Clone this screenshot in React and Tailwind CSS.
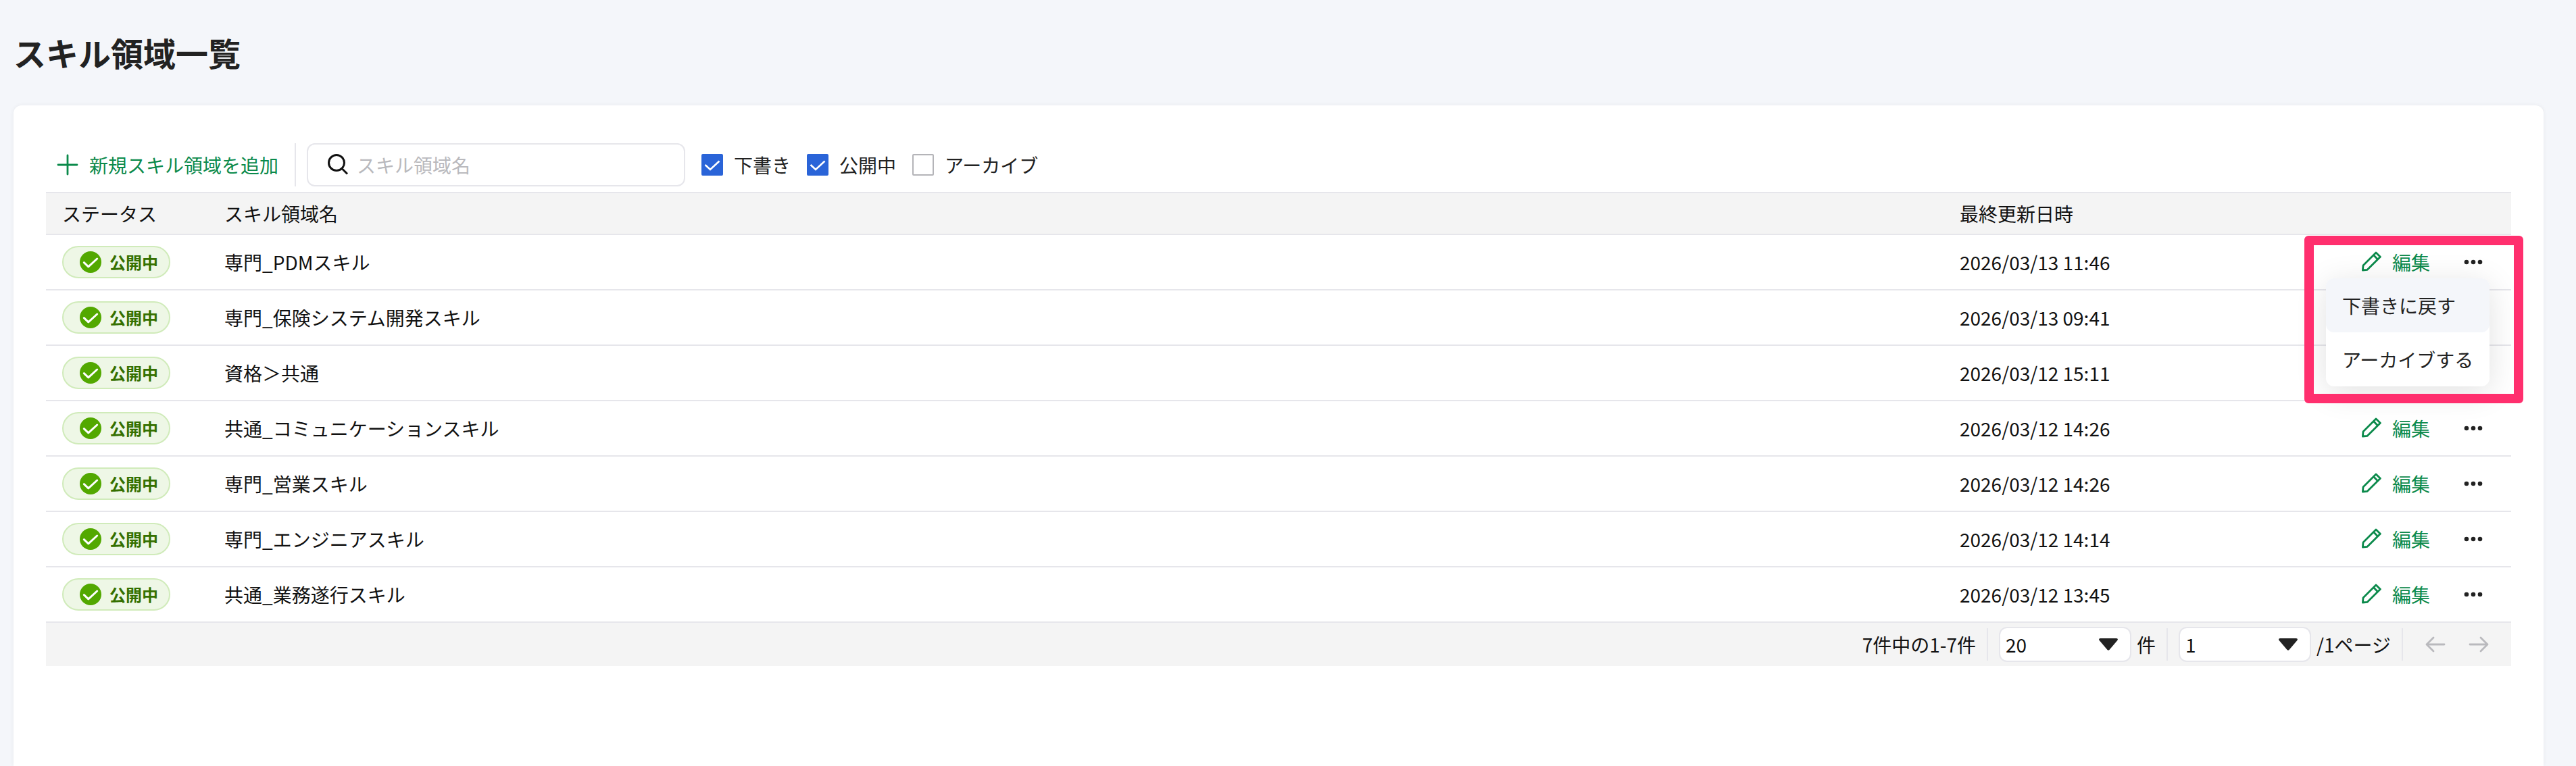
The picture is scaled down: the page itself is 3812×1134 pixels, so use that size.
import { useState } from "react";

const areas = [
  { name: "専門_PDMスキル", updated: "2026/03/13 11:46", menu: true },
  { name: "専門_保険システム開発スキル", updated: "2026/03/13 09:41", covered: true },
  { name: "資格＞共通", updated: "2026/03/12 15:11", covered: true },
  { name: "共通_コミュニケーションスキル", updated: "2026/03/12 14:26" },
  { name: "専門_営業スキル", updated: "2026/03/12 14:26" },
  { name: "専門_エンジニアスキル", updated: "2026/03/12 14:14" },
  { name: "共通_業務遂行スキル", updated: "2026/03/12 13:45" },
];

function PlusIcon() {
  return (
    <svg className="size-8" viewBox="0 0 32 32" fill="none" stroke="currentColor" strokeWidth="2.8" strokeLinecap="round" aria-hidden="true">
      <path d="M16 2v28M2 16h28" />
    </svg>
  );
}

function SearchIcon() {
  return (
    <svg className="size-8 shrink-0" viewBox="0 0 32 32" fill="none" stroke="#111" strokeWidth="3" aria-hidden="true">
      <circle cx="14" cy="13" r="11.5" />
      <path d="M22 21.5l8 8" />
    </svg>
  );
}

function PencilIcon() {
  return (
    <svg className="size-8" viewBox="0 0 32 32" fill="none" stroke="currentColor" strokeWidth="2.8" strokeLinejoin="round" aria-hidden="true">
      <path d="M4.400 28l.6-7L24 1.900l6.400 6.300L11.200 27.300z" />
      <path d="M20.300 5.600l6.300 6.300" />
    </svg>
  );
}

function CheckCircleIcon() {
  return (
    <svg className="size-8" viewBox="0 0 32 32" fill="none" aria-hidden="true">
      <circle cx="16" cy="16" r="16" fill="#52a800" />
      <path d="M6.300 16.700l6.500 6.200L25.700 11" stroke="#fff" strokeWidth="3" strokeLinecap="round" strokeLinejoin="round" />
    </svg>
  );
}

function DotsIcon() {
  return (
    <svg className="size-8" viewBox="0 0 32 32" fill="#222" aria-hidden="true">
      <circle cx="6" cy="16" r="3.300" />
      <circle cx="16" cy="16" r="3.300" />
      <circle cx="26" cy="16" r="3.300" />
    </svg>
  );
}

function ArrowIcon({ className }) {
  return (
    <svg className={className} viewBox="0 0 32 32" fill="none" stroke="currentColor" strokeWidth="2.800" strokeLinecap="round" strokeLinejoin="round" aria-hidden="true">
      <path d="M29 16H3M13 6L3 16l10 10" />
    </svg>
  );
}

function Filter({ label, initial }) {
  const [checked, setChecked] = useState(initial);
  return (
    <label className="flex items-center gap-4">
      <span className="grid size-8">
        <input
          type="checkbox"
          checked={checked}
          onChange={(e) => setChecked(e.target.checked)}
          className="col-start-1 row-start-1 size-8 appearance-none rounded-xs border-2 border-[#b4b4b8] bg-white checked:border-[#2a64d8] checked:bg-[#2a64d8]"
        />
        {checked && (
          <svg className="pointer-events-none col-start-1 row-start-1 size-8" viewBox="0 0 32 32" fill="none" stroke="#fff" strokeWidth="2.6" aria-hidden="true">
            <path d="M5.5 16l7.5 7L26.500 10.500" />
          </svg>
        )}
      </span>
      {label}
    </label>
  );
}

function PageSelect({ label, value }) {
  return (
    <span className="grid items-center">
      <select
        aria-label={label}
        defaultValue={value}
        className="col-start-1 row-start-1 h-[52px] w-[196px] appearance-none rounded-xl border-2 border-[#e6e6eb] bg-white pl-2"
      >
        <option>{value}</option>
      </select>
      <svg className="pointer-events-none col-start-1 row-start-1 mr-5 h-[18px] w-7 justify-self-end" viewBox="0 0 28 18" fill="#222" aria-hidden="true">
        <path d="M2 0h24q3 .6 1.400 3L15.500 17q-1.500 1.600-3 0L.6 3Q-1 .6 2 0z" />
      </svg>
    </span>
  );
}

function RowMenu() {
  return (
    <div role="menu" className="absolute top-16 right-8 z-10 flex min-w-[242px] flex-col rounded-xl bg-white text-[#222] shadow-[0_8px_48px_rgba(0,0,0,0.12)]">
      <button role="menuitem" className="h-20 rounded-xl bg-[#f4f6fa] pr-5 pl-6 text-left whitespace-nowrap">下書きに戻す</button>
      <button role="menuitem" className="h-20 rounded-xl pr-5 pl-6 text-left whitespace-nowrap">アーカイブする</button>
    </div>
  );
}

function RowActions() {
  return (
    <div className="flex items-center justify-end gap-4">
      <button className="flex items-center gap-4 px-4 text-[#0b8a4b]">
        <PencilIcon />
        編集
      </button>
      <button aria-label="その他の操作" className="flex size-16 items-center justify-center">
        <DotsIcon />
      </button>
    </div>
  );
}

export default function App() {
  return (
    <div className="flex min-h-screen flex-col bg-[#f4f6fa] pr-12 pl-5 font-['Noto_Sans_CJK_JP',sans-serif] text-[28px] leading-[40px] text-[#111]">
      <header className="flex h-[156px] items-center pb-0.5">
        <h1 className="text-5xl font-bold text-[#222]">スキル領域一覧</h1>
      </header>
      <main className="flex-1 rounded-t-xl bg-white px-12 pt-14 shadow-[0_0_6px_rgba(0,0,0,0.06)]">
        <div className="mb-2 flex h-16 items-center">
          <button className="flex items-center gap-4 px-4 text-[#0b8a4b]">
            <PlusIcon />
            新規スキル領域を追加
          </button>
          <span className="mr-4 ml-2 h-16 w-0.5 bg-[#e6e6eb]" />
          <label className="mr-6 flex h-16 w-[560px] items-center gap-3 rounded-xl border-2 border-[#e6e6eb] px-7">
            <SearchIcon />
            <input aria-label="スキル領域名" placeholder="スキル領域名" className="w-full min-w-0 outline-none placeholder:text-[#b9b9bd]" />
          </label>
          <div className="flex gap-6 text-[#222]">
            <Filter label="下書き" initial={true} />
            <Filter label="公開中" initial={true} />
            <Filter label="アーカイブ" initial={false} />
          </div>
        </div>

        <table className="w-full table-fixed border-separate border-spacing-0 text-left">
          <thead>
            <tr className="h-16 bg-[#f4f4f4]">
              <th className="w-60 border-y-2 border-[#e6e6eb] px-6 font-normal">ステータス</th>
              <th className="border-y-2 border-[#e6e6eb] px-6 font-normal">スキル領域名</th>
              <th className="w-[420px] border-y-2 border-[#e6e6eb] px-6 font-normal">最終更新日時</th>
              <th className="w-[420px] border-y-2 border-[#e6e6eb] px-6" aria-label="操作" />
            </tr>
          </thead>
          <tbody>
            {areas.map((area) => (
              <tr key={area.name} className="h-[82px]">
                <td className="border-b-2 border-[#e6e6eb] px-6">
                  <span className="flex h-12 w-40 items-center gap-3 rounded-full border-2 border-[#d0ebba] bg-[#eef7e6] pl-6 text-2xl font-bold text-[#357000]">
                    <CheckCircleIcon />
                    公開中
                  </span>
                </td>
                <td className="border-b-2 border-[#e6e6eb] px-6">{area.name}</td>
                <td className="border-b-2 border-[#e6e6eb] px-6">{area.updated}</td>
                <td className="relative border-b-2 border-[#e6e6eb] px-6">
                  {!area.covered && <RowActions />}
                  {area.menu && (
                    <>
                      <RowMenu />
                      <div className="pointer-events-none absolute top-px -right-[18px] z-20 h-[248px] w-[324px] rounded-md border-[14px] border-[#ff2f6e]" />
                    </>
                  )}
                </td>
              </tr>
            ))}
          </tbody>
        </table>

        <nav aria-label="ページ送り" className="flex h-16 items-center justify-end bg-[#f4f4f4] pr-4">
          <span>7件中の1-7件</span>
          <span className="mx-4 h-12 w-0.5 bg-[#e6e6eb]" />
          <PageSelect label="表示件数" value="20" />
          <span className="ml-2">件</span>
          <span className="mx-4 h-12 w-0.5 bg-[#e6e6eb]" />
          <PageSelect label="ページ" value="1" />
          <span className="ml-2">/1ページ</span>
          <span className="mx-4 h-12 w-0.5 bg-[#e6e6eb]" />
          <button aria-label="前のページ" className="flex h-12 w-16 items-center justify-center text-[#b9b9bd]" disabled>
            <ArrowIcon className="size-8" />
          </button>
          <button aria-label="次のページ" className="flex h-12 w-16 items-center justify-center text-[#b9b9bd]" disabled>
            <ArrowIcon className="size-8 rotate-180" />
          </button>
        </nav>
      </main>
    </div>
  );
}
